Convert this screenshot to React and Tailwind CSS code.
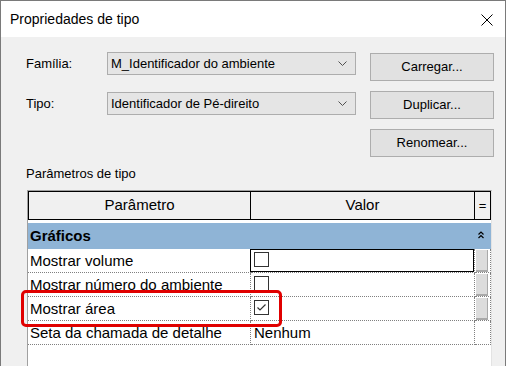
import React from 'react';

const Chevron = () => (
  <svg width="9" height="5" viewBox="0 0 9 5" className="block">
    <path d="M0.5 0.5 L4.5 4.5 L8.5 0.5" fill="none" stroke="#505050" strokeWidth="1" />
  </svg>
);

const Select = ({ value, className = '' }) => (
  <div className={`w-[249px] h-[23px] bg-[#e5e5e5] border border-[#adadad] flex items-center justify-between pl-[3px] pr-[8px] ${className}`}>
    <span>{value}</span>
    <Chevron />
  </div>
);

const Button = ({ children, className = '' }) => (
  <div className={`w-[124px] h-[28px] bg-[#e1e1e1] border border-[#adadad] flex items-center justify-center ${className}`}>
    {children}
  </div>
);

const Checkbox = ({ checked }) => (
  <div className="mt-[3px] ml-[3px] w-[15px] h-[15px] border border-[#333333] bg-white flex items-center justify-center">
    {checked && (
      <svg width="13" height="13" viewBox="0 0 13 13" className="block">
        <path d="M2.5 6.5 L5 9 L10.5 3.5" fill="none" stroke="#333333" strokeWidth="1.2" />
      </svg>
    )}
  </div>
);

const Knob = () => (
  <div className="mt-[1px] ml-[1px] w-[12px] h-[22px] bg-[#dcdcdc] border-r border-b-2 border-[#a9a9a9]" />
);

const rows = [
  { name: 'Mostrar volume', kind: 'check', checked: false, focus: true, knob: true },
  { name: 'Mostrar número do ambiente', kind: 'check', checked: false, knob: true },
  { name: 'Mostrar área', kind: 'check', checked: true, knob: true },
  { name: 'Seta da chamada de detalhe', kind: 'text', value: 'Nenhum' },
];

export default function App() {
  return (
    <div className="w-[508px] h-[366px] overflow-hidden bg-white flex text-black [font-family:'Liberation_Sans',Arial,sans-serif]">
      <div className="w-[506px] h-full border-l border-t border-r border-[#7a7a7a] flex flex-col">
        {/* title bar */}
        <div className="h-[36px] shrink-0 bg-white flex items-center justify-between pl-[9px] pr-[12px]">
          <span className="text-[14px]">Propriedades de tipo</span>
          <svg width="12" height="12" viewBox="0 0 12 12" className="block mt-[2px]">
            <path d="M0.5 0.5 L11.5 11.5 M11.5 0.5 L0.5 11.5" stroke="#000" strokeWidth="1" />
          </svg>
        </div>

        {/* body */}
        <div className="flex-1 bg-[#f0f0f0] pl-[25px] pt-[15px] text-[13px] relative">
          <div className="flex items-start">
            <div className="w-[81px] h-[23px] flex items-center">Família:</div>
            <Select value="M_Identificador do ambiente" />
            <Button className="ml-[14px] mt-[1px]">Carregar...</Button>
          </div>
          <div className="flex items-start mt-[10px]">
            <div className="w-[81px] h-[23px] mt-[1px] flex items-center">Tipo:</div>
            <Select value="Identificador de Pé-direito" className="mt-[1px]" />
            <Button className="ml-[14px]">Duplicar...</Button>
          </div>
          <div className="flex mt-[10px] pl-[344px]">
            <Button>Renomear...</Button>
          </div>

          <div className="mt-[9px] leading-[15px]">Parâmetros de tipo</div>

          {/* property grid */}
          <div className="mt-[9px] ml-[1px] w-[465px] h-[200px] bg-white border-l border-t border-r border-[#a0a0a0] border-r-[#e3e3e3] text-[15px]">
            <div className="h-[29px] flex bg-[#f0f0f0] border border-black">
              <div className="w-[222px] border-r border-black flex items-center justify-center">Parâmetro</div>
              <div className="w-[224px] border-r border-black flex items-center justify-center">Valor</div>
              <div className="w-[15px] flex items-center justify-center text-[13px]">=</div>
            </div>
            <div className="mt-[3px] h-[26px] bg-[#8fb4d6] flex items-center justify-between pl-[2px] pr-[7px]">
              <span className="font-bold">Gráficos</span>
              <svg width="6" height="8" viewBox="0 0 6 8" className="block -mt-[3px]">
                <path d="M0.5 3.5 L3 1 L5.5 3.5 M0.5 7 L3 4.5 L5.5 7" fill="none" stroke="#000" strokeWidth="1.2" />
              </svg>
            </div>
            {rows.map((r) => (
              <div key={r.name} className="h-[24px] flex">
                <div className="w-[223px] border-r border-b border-dotted border-[#808080] pl-[2px] flex items-center leading-none">
                  {r.name}
                </div>
                <div className="w-[224px] relative border-r border-b border-dotted border-[#808080] flex items-start">
                  {r.kind === 'check' ? (
                    <Checkbox checked={r.checked} />
                  ) : (
                    <span className="pl-[3px] h-full flex items-center leading-none">{r.value}</span>
                  )}
                  {r.focus && <div className="absolute -left-[1px] top-0 right-0 bottom-0 border border-black" />}
                </div>
                <div className="w-[16px] border-r border-b border-dotted border-[#808080]">
                  {r.knob && <Knob />}
                </div>
              </div>
            ))}
          </div>

          {/* red highlight */}
          <div className="absolute left-[20px] top-[253px] w-[261px] h-[37px] border-[3px] border-[#e00000] rounded-[5px]" />
        </div>
      </div>
    </div>
  );
}
